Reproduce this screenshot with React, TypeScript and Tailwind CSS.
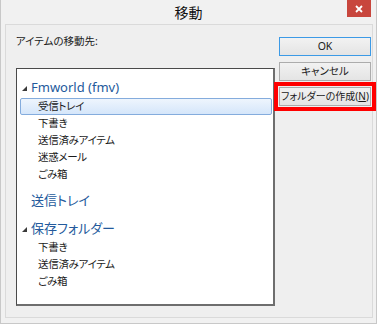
import React from "react";

const Tri = () => (
  <svg width="5" height="5" viewBox="0 0 5 5" className="shrink-0">
    <polygon points="5,0 5,5 0,5" fill="#3a3a3a" />
  </svg>
);

const Sub = ({ text, selected }: { text: string; selected?: boolean }) =>
  selected ? (
    <div className="ml-[3px] mr-[1px] h-[17px] flex items-center pl-[17px] border border-[#84acdd] rounded-[2px] bg-gradient-to-b from-[#eef5fd] to-[#d5e6fa] text-[10.5px] tracking-[-0.3px] text-[#1a1a1a]">
      {text}
    </div>
  ) : (
    <div className="h-[17px] flex items-center pl-[21px] text-[10.5px] tracking-[-0.3px] text-[#1a1a1a]">{text}</div>
  );

const Btn = ({ children, focus }: { children: React.ReactNode; focus?: boolean }) => (
  <div
    className={
      "h-[19px] flex items-center justify-center whitespace-nowrap text-[10.5px] text-[#1a1a1a] bg-gradient-to-b from-[#f2f2f2] to-[#e4e4e4] border " +
      (focus ? "border-[#3c9ae6]" : "border-[#acacac]")
    }
  >
    {children}
  </div>
);

export default function App() {
  return (
    <div className="relative w-[377px] h-[324px] bg-[#f1f1f1] border-x border-b border-[#c8c8c8] font-['Noto_Sans','Noto_Sans_CJK_JP',sans-serif] [font-feature-settings:'palt'] overflow-hidden">
      <div className="h-[24px] grid grid-cols-[1fr_auto_1fr]">
        <div />
        <div className="flex items-center text-[14px] text-[#111]">移動</div>
        <div className="flex justify-end items-start">
          <div className="mr-[5px] w-[24px] h-[17px] bg-[#c8463d] flex items-center justify-center">
            <svg width="8" height="8" viewBox="0 0 8 8">
              <path d="M1 1 L7 7 M7 1 L1 7" stroke="#fff" strokeWidth="1.8" />
            </svg>
          </div>
        </div>
      </div>
      <div className="ml-[4px] w-[368px] h-[294px] border border-[#dadada] bg-[#efefef] flex">
        <div className="pl-[10px] pt-[9px]">
          <div className="h-[16px] flex items-center text-[10.5px] text-[#1a1a1a]">アイテムの移動先:</div>
          <div className="mt-[18px] w-[259px] h-[238px] bg-white border-l border-t border-[#4a4a4a] border-r-2 border-b-2 border-r-[#6e6e6e] border-b-[#6e6e6e] pt-[9px]">
            <div className="h-[20px] flex items-center pl-[5px]">
              <Tri />
              <span className="ml-[4px] text-[13px] text-[#245a9c]">Fmworld (fmv)</span>
            </div>
            <Sub text="受信トレイ" selected />
            <Sub text="下書き" />
            <Sub text="送信済みアイテム" />
            <Sub text="迷惑メール" />
            <Sub text="ごみ箱" />
            <div className="mt-[8px] h-[20px] flex items-center pl-[14px] text-[13px] text-[#245a9c]">送信トレイ</div>
            <div className="mt-[8px] h-[20px] flex items-center pl-[5px]">
              <Tri />
              <span className="ml-[4px] text-[13px] text-[#245a9c]">保存フォルダー</span>
            </div>
            <Sub text="下書き" />
            <Sub text="送信済みアイテム" />
            <Sub text="ごみ箱" />
          </div>
        </div>
        <div className="ml-[4px] w-[92px] pt-[12px] flex flex-col gap-[6px]">
          <Btn focus>OK</Btn>
          <Btn>キャンセル</Btn>
          <Btn>
            <span className="text-[10px]">
              フォルダーの作成(<span className="underline">N</span>)
            </span>
          </Btn>
        </div>
      </div>
      <div className="absolute left-[273px] top-[82px] w-[102px] h-[29px] border-4 border-[#ff0000]" />
    </div>
  );
}
